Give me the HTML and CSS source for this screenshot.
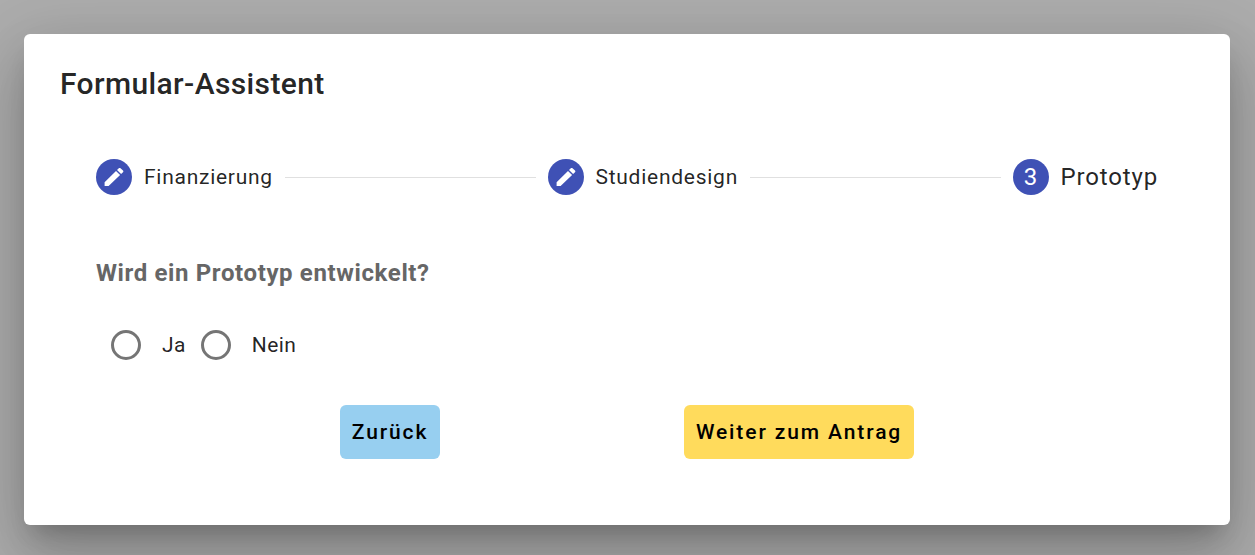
FILE: index.html
```
<!DOCTYPE html>
<html lang="de">
<head>
<meta charset="utf-8">
<meta name="viewport" content="width=device-width, initial-scale=1">
<title>Formular-Assistent</title>
<link rel="stylesheet" href="styles.css">
</head>
<body>
<main class="dialog" role="dialog" aria-labelledby="dialog-title">
  <h1 class="title" id="dialog-title">Formular-Assistent</h1>
  <ol class="stepper">
    <li class="step">
      <span class="step-icon"><svg class="pencil" viewBox="0 0 24 24" aria-hidden="true"><path d="M2.600 17.200V21h4L18.100 10.100l-4.100-4.100zM21 7.300c.5-.5.5-1.200 0-1.700l-2.500-2.300c-.5-.5-1.200-.5-1.700 0L15 5.100l4.100 4z"/></svg></span>
      <span class="step-label">Finanzierung</span>
    </li>
    <li class="line" role="presentation"></li>
    <li class="step">
      <span class="step-icon"><svg class="pencil" viewBox="0 0 24 24" aria-hidden="true"><path d="M2.600 17.200V21h4L18.100 10.100l-4.100-4.100zM21 7.300c.5-.5.5-1.200 0-1.700l-2.500-2.300c-.5-.5-1.200-.5-1.700 0L15 5.100l4.100 4z"/></svg></span>
      <span class="step-label">Studiendesign</span>
    </li>
    <li class="line" role="presentation"></li>
    <li class="step" aria-current="step">
      <span class="step-icon">3</span>
      <span class="step-label step-label-current">Prototyp</span>
    </li>
  </ol>
  <form class="form">
    <fieldset class="question">
      <legend class="question-text">Wird ein Prototyp entwickelt?</legend>
      <div class="options">
        <label class="option"><input class="radio" type="radio" name="prototyp" value="ja">Ja</label>
        <label class="option"><input class="radio" type="radio" name="prototyp" value="nein">Nein</label>
      </div>
    </fieldset>
    <div class="actions">
      <button class="button button-back" type="button">Zurück</button>
      <button class="button button-next" type="button">Weiter zum Antrag</button>
    </div>
  </form>
</main>
</body>
</html>
```
FILE: styles.css
```
* {
  box-sizing: border-box;
}

body {
  margin: 0;
  padding: 34px 25px 30px 24px;
  background: #adadad;
  color: rgba(0, 0, 0, 0.87);
  font-family: Roboto, "Liberation Sans", sans-serif;
}

.dialog {
  padding: 30px 36px 66px;
  border-radius: 6px;
  background: #fff;
  box-shadow: 0 16px 22px -10px rgba(0, 0, 0, 0.2),
    0 36px 57px 4px rgba(0, 0, 0, 0.14),
    0 14px 69px 12px rgba(0, 0, 0, 0.12);
}

.title {
  margin: 0 0 29px;
  font-size: 30px;
  line-height: 40px;
  font-weight: 500;
  letter-spacing: 0.0125em;
}

.stepper {
  display: flex;
  align-items: center;
  margin: 0;
  padding: 0 36px;
  height: 88px;
  list-style: none;
}

.step {
  display: flex;
  align-items: center;
  gap: 12px;
}

.step-icon {
  display: flex;
  align-items: center;
  justify-content: center;
  width: 36px;
  height: 36px;
  border-radius: 50%;
  background: #3f51b5;
  color: #fff;
  font-size: 24px;
}

.pencil {
  width: 24px;
  height: 24px;
  fill: currentColor;
}

.step-label {
  font-size: 21px;
  letter-spacing: 0.035em;
}

.step-label-current {
  font-size: 24px;
}

.line {
  flex: 1;
  margin: 0 12px;
  border-top: 1px solid #e0e0e0;
}

.form {
  padding: 36px 36px 0;
}

.question {
  margin: 0;
  padding: 0;
  border: 0;
}

.question-text {
  padding: 0;
  color: #666;
  font-size: 24px;
  line-height: 32px;
  font-weight: 700;
  letter-spacing: 0.026em;
}

.options {
  display: flex;
  gap: 15px;
  padding: 41px 15px 0;
}

.option {
  display: flex;
  align-items: center;
  gap: 21px;
  font-size: 21px;
  letter-spacing: 0.018em;
}

.radio {
  appearance: none;
  width: 30px;
  height: 30px;
  margin: 0;
  border: 3px solid #757575;
  border-radius: 50%;
}

.radio:checked {
  background: radial-gradient(#3f51b5 50%, transparent 55%);
  border-color: #3f51b5;
}

.actions {
  display: flex;
  justify-content: space-around;
  margin-top: 45px;
  padding: 0 122px;
}

.button {
  height: 54px;
  padding: 0 12px;
  border: 0;
  border-radius: 6px;
  color: #000;
  font: 500 21px Roboto, "Liberation Sans", sans-serif;
  letter-spacing: 0.09em;
}

.button-back {
  background: #97cff0;
}

.button-next {
  background: #ffdb5c;
}
```
